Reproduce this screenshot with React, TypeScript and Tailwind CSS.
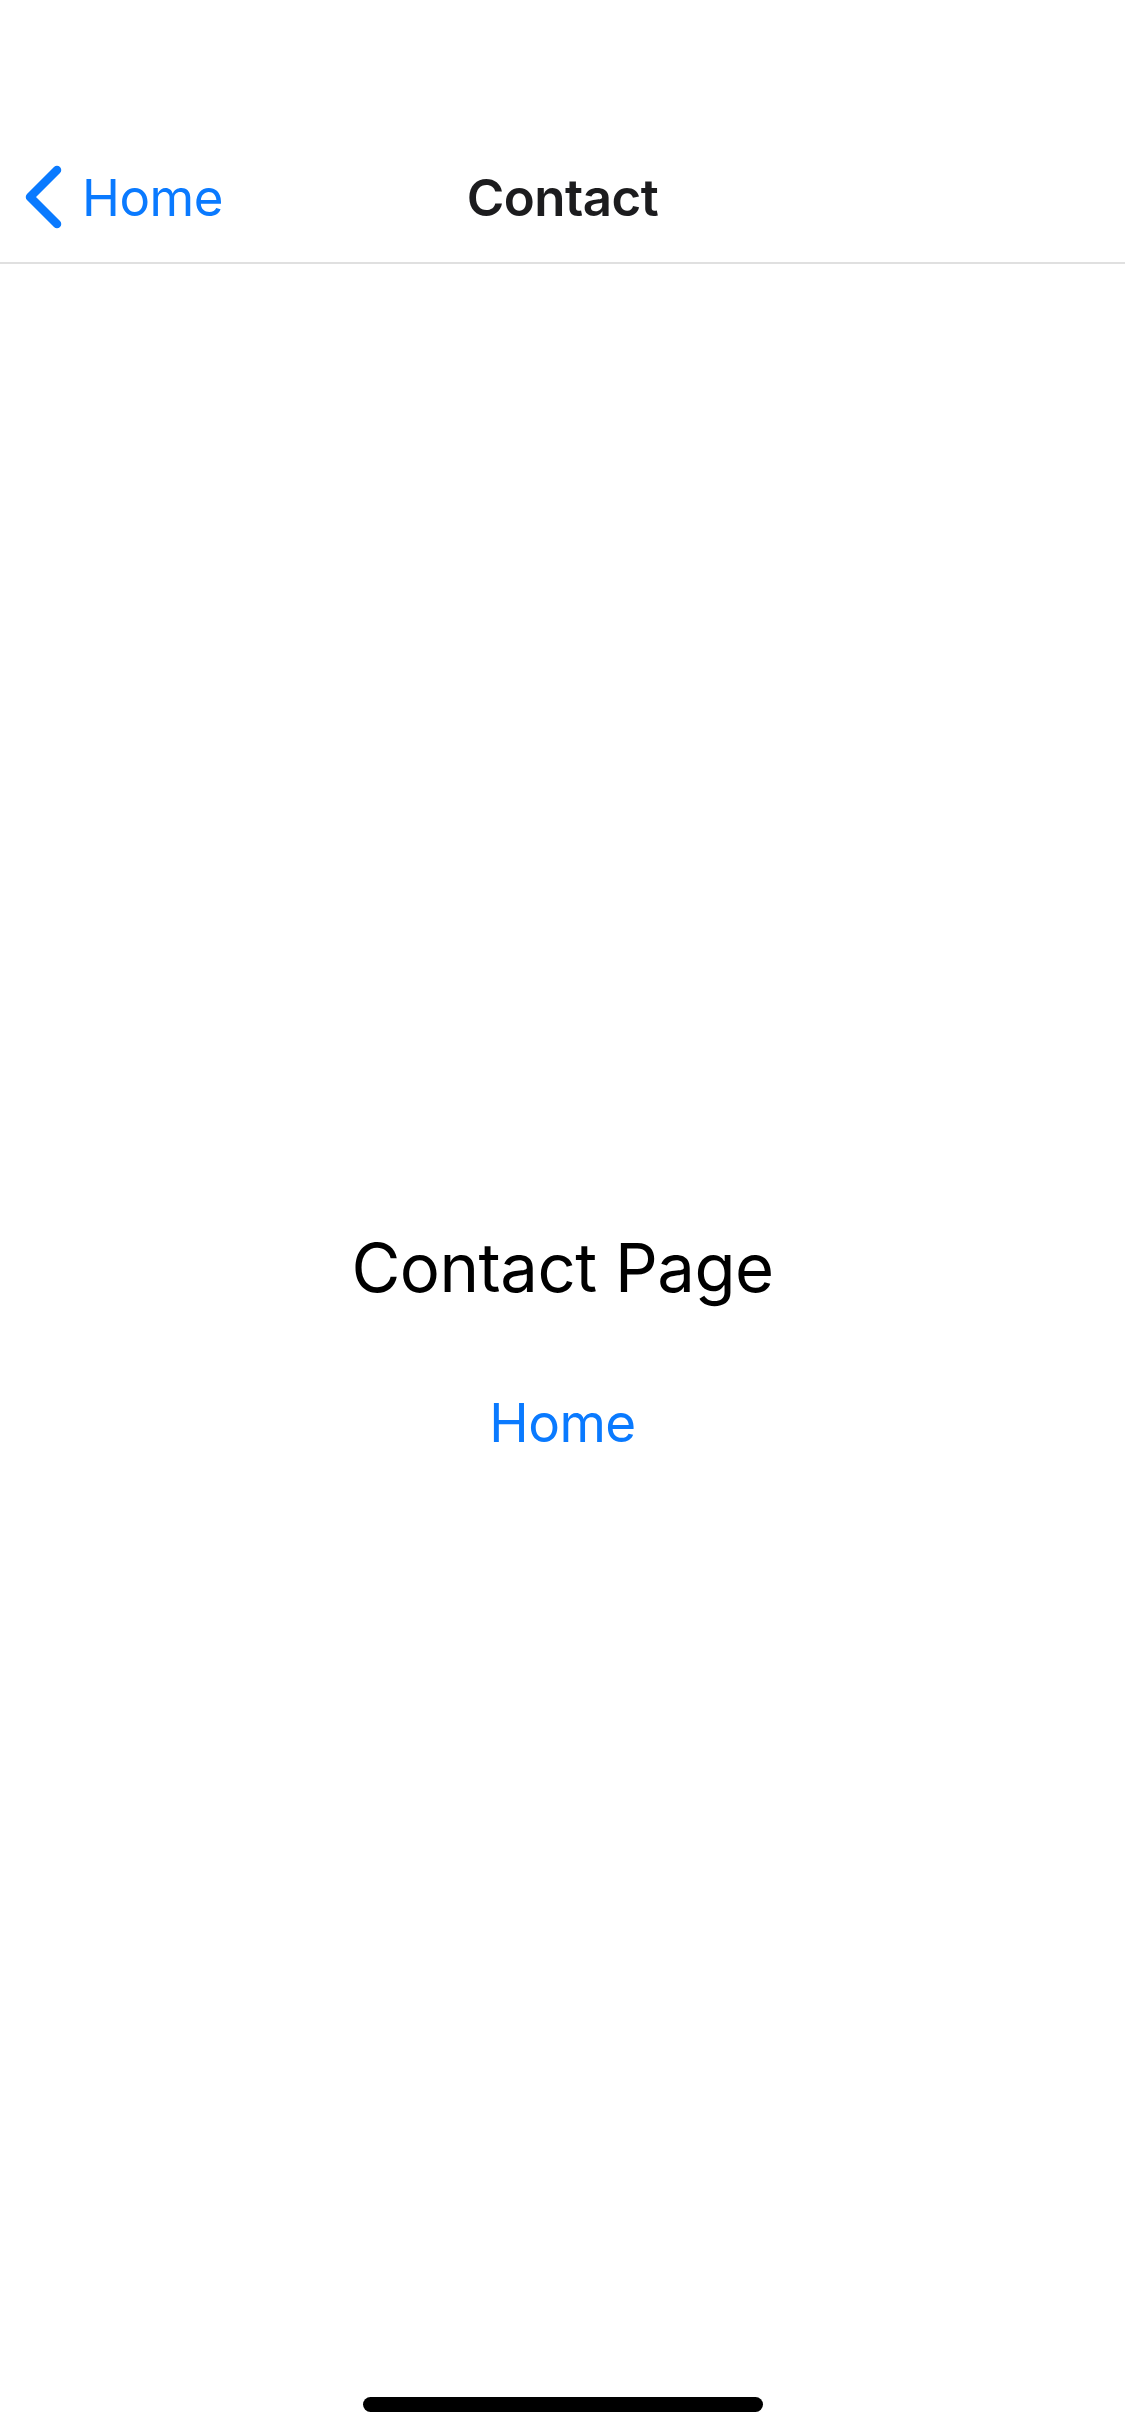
const App = () => {
  return (
    <div
      className="relative min-h-screen w-full bg-white flex flex-col"
      style={{ fontFamily: "Inter, 'Noto Sans', sans-serif" }}
    >
      {/* status bar space */}
      <div className="h-[132px]" />

      {/* nav bar */}
      <div className="relative h-[132px] border-b-[2px] border-[#e0e0e0] flex items-center">
        <button className="flex items-center pl-[22px] text-[#0a7aff]">
          <svg width="42" height="64" viewBox="0 0 42 64" className="mr-[18px]">
            <path
              d="M35 5 L8 32 L35 59"
              fill="none"
              stroke="#0a7aff"
              strokeWidth="8.5"
              strokeLinecap="round"
              strokeLinejoin="round"
            />
          </svg>
          <span className="text-[51px] leading-none tracking-[-0.5px]">Home</span>
        </button>
        <div className="absolute left-1/2 -translate-x-1/2 text-[51px] font-semibold text-[#1c1c1e] leading-none tracking-[-0.5px]">
          Contact
        </div>
      </div>

      {/* content */}
      <div className="flex-1 flex flex-col items-center justify-center pb-[16px]">
        <h1 className="text-[67px] text-black leading-none tracking-[-0.5px]">Contact Page</h1>
        <a className="mt-[96px] text-[53px] text-[#0a7aff] leading-none tracking-[-0.5px]">Home</a>
      </div>

      {/* home indicator */}
      <div className="absolute bottom-[24px] left-1/2 -translate-x-1/2 w-[400px] h-[15px] rounded-full bg-black" />
    </div>
  );
};

export default App;
